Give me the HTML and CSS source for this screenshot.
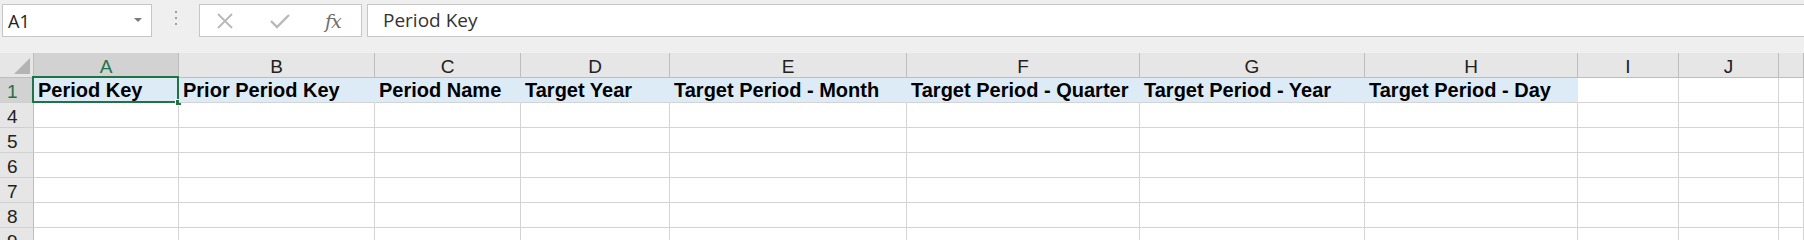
FILE: index.html
```html
<!DOCTYPE html>
<html>

<head>
    <title>Book1 - Excel</title>
    <link rel="stylesheet" href="styles.css">
</head>

<body>
    <div class="toolbar">
        <div class="name-box">
            <span>A1</span>
            <svg class="name-arrow" width="8" height="5" viewBox="0 0 8 5">
                <path d="M0 0 L8 0 L4 4 Z" fill="#7a7a7a" />
            </svg>
        </div>
        <div class="grip"><i></i><i></i><i></i></div>
        <div class="fx-buttons">
            <svg class="fx-icon" width="18" height="16" viewBox="0 0 18 16">
                <path d="M2 1 L16 15 M16 1 L2 15" stroke="#b8b8b8" stroke-width="1.8" fill="none" />
            </svg>
            <svg class="fx-icon" width="20" height="16" viewBox="0 0 20 16">
                <path d="M1 8 L7 14 L19 2" stroke="#b8b8b8" stroke-width="2.4" fill="none" />
            </svg>
            <span class="fx">fx</span>
        </div>
        <div class="formula">Period Key</div>
    </div>

    <div class="sheet">
        <!-- column headers -->
        <div class="corner"><span class="corner-tri"></span></div>
        <div class="col-head selected">A</div>
        <div class="col-head">B</div>
        <div class="col-head">C</div>
        <div class="col-head">D</div>
        <div class="col-head">E</div>
        <div class="col-head">F</div>
        <div class="col-head">G</div>
        <div class="col-head">H</div>
        <div class="col-head">I</div>
        <div class="col-head">J</div>
        <div class="col-head"></div>

        <!-- row 1 -->
        <div class="row-head selected">1</div>
        <div class="cell head-cell active">Period Key<span class="selection"><span class="handle"></span></span></div>
        <div class="cell head-cell">Prior Period Key</div>
        <div class="cell head-cell">Period Name</div>
        <div class="cell head-cell">Target Year</div>
        <div class="cell head-cell">Target Period - Month</div>
        <div class="cell head-cell">Target Period - Quarter</div>
        <div class="cell head-cell">Target Period - Year</div>
        <div class="cell head-cell">Target Period - Day</div>
        <div class="cell"></div>
        <div class="cell"></div>
        <div class="cell"></div>

        <div class="row-head">4</div>
        <div class="cell"></div><div class="cell"></div><div class="cell"></div><div class="cell"></div><div class="cell"></div>
        <div class="cell"></div><div class="cell"></div><div class="cell"></div><div class="cell"></div><div class="cell"></div><div class="cell"></div>

        <div class="row-head">5</div>
        <div class="cell"></div><div class="cell"></div><div class="cell"></div><div class="cell"></div><div class="cell"></div>
        <div class="cell"></div><div class="cell"></div><div class="cell"></div><div class="cell"></div><div class="cell"></div><div class="cell"></div>

        <div class="row-head">6</div>
        <div class="cell"></div><div class="cell"></div><div class="cell"></div><div class="cell"></div><div class="cell"></div>
        <div class="cell"></div><div class="cell"></div><div class="cell"></div><div class="cell"></div><div class="cell"></div><div class="cell"></div>

        <div class="row-head">7</div>
        <div class="cell"></div><div class="cell"></div><div class="cell"></div><div class="cell"></div><div class="cell"></div>
        <div class="cell"></div><div class="cell"></div><div class="cell"></div><div class="cell"></div><div class="cell"></div><div class="cell"></div>

        <div class="row-head">8</div>
        <div class="cell"></div><div class="cell"></div><div class="cell"></div><div class="cell"></div><div class="cell"></div>
        <div class="cell"></div><div class="cell"></div><div class="cell"></div><div class="cell"></div><div class="cell"></div><div class="cell"></div>

        <div class="row-head">9</div>
        <div class="cell"></div><div class="cell"></div><div class="cell"></div><div class="cell"></div><div class="cell"></div>
        <div class="cell"></div><div class="cell"></div><div class="cell"></div><div class="cell"></div><div class="cell"></div><div class="cell"></div>
    </div>
</body>

</html>
```

FILE: styles.css
```css
body {
    margin: 0;
    overflow: hidden;
    background-color: #ffffff;
    font-family: "Liberation Sans", Arial, sans-serif;
}

.toolbar {
    display: flex;
    align-items: flex-start;
    height: 53px;
    box-sizing: border-box;
    padding: 4px 0 0 2px;
    background-color: #efefef;
}

.name-box,
.fx-buttons,
.formula {
    height: 33px;
    box-sizing: border-box;
    background-color: #ffffff;
    border: 1px solid #c6c6c6;
}

.name-box {
    width: 150px;
    display: flex;
    align-items: center;
    justify-content: space-between;
    padding: 0 9px 0 5px;
    font-family: "Open Sans", sans-serif;
    font-size: 18px;
    color: #222222;
}

.grip {
    width: 47px;
    display: flex;
    flex-direction: column;
    align-items: center;
    gap: 4px;
    padding-top: 7px;
}

.grip i {
    width: 2px;
    height: 2px;
    background-color: #a0a0a0;
}

.fx-buttons {
    width: 163px;
    display: flex;
    align-items: center;
    padding-left: 16px;
}

.fx-icon {
    margin-right: 36px;
}

.fx-icon + .fx-icon {
    margin-right: 35px;
}

.fx {
    font-family: "DejaVu Serif", "Liberation Serif", serif;
    font-style: italic;
    font-size: 19px;
    color: #6e6e6e;
    letter-spacing: -1px;
}

.formula {
    flex: 1;
    margin: 0 -2px 0 5px;
    padding-left: 15px;
    font-family: "Open Sans", sans-serif;
    font-size: 19px;
    line-height: 30px;
    color: #333333;
}

.sheet {
    display: grid;
    grid-template-columns: 34px 145px 196px 146px 149px 237px 233px 225px 213px 101px 100px 1fr;
    grid-auto-rows: 25px;
}

.corner,
.col-head,
.row-head {
    box-sizing: border-box;
    background-color: #e6e6e6;
    color: #222222;
    font-size: 19px;
    line-height: 24px;
    padding-top: 2px;
}

.corner {
    position: relative;
    border-right: 1px solid #bdbdbd;
    border-bottom: 1px solid #bdbdbd;
}

.corner-tri {
    position: absolute;
    right: 3px;
    bottom: 3px;
    width: 0;
    height: 0;
    border-left: 16px solid transparent;
    border-bottom: 16px solid #b4b4b4;
}

.col-head {
    text-align: center;
    border-right: 1px solid #bdbdbd;
    border-bottom: 1px solid #bdbdbd;
}

.row-head {
    padding-left: 7px;
    border-right: 1px solid #bdbdbd;
    border-bottom: 1px solid #d0d0d0;
}

.col-head.selected,
.row-head.selected {
    background-color: #d2d2d2;
    color: #217346;
}

.col-head.selected {
    border-bottom: 2px solid #217346;
}

.cell {
    box-sizing: border-box;
    border-right: 1px solid #d4d4d4;
    border-bottom: 1px solid #d4d4d4;
}

.head-cell {
    position: relative;
    background-color: #ddebf7;
    border-right-color: #ddebf7;
    font-weight: bold;
    font-size: 20px;
    line-height: 23px;
    padding: 1px 0 0 4px;
    color: #000000;
    white-space: nowrap;
}

.selection {
    position: absolute;
    top: -2px;
    left: -2px;
    right: -1px;
    bottom: -1px;
    border: 2px solid #217346;
}

.handle {
    position: absolute;
    right: -5px;
    bottom: -5px;
    width: 5px;
    height: 5px;
    background-color: #217346;
    border: 1px solid #ffffff;
}
```
